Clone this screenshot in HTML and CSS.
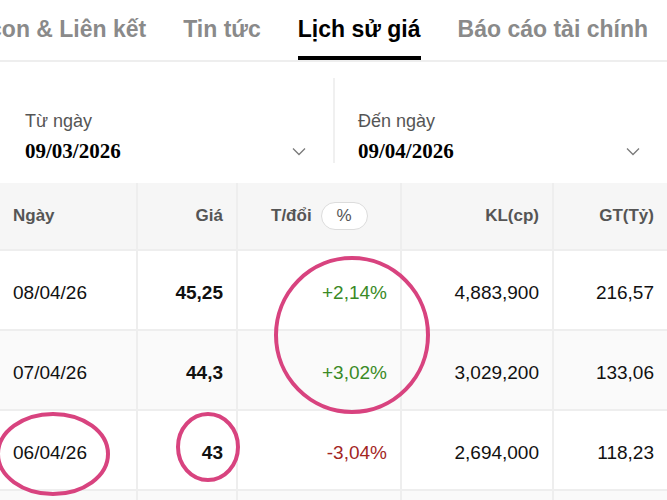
FILE: index.html
```html
<!DOCTYPE html>
<html lang="vi">
<head>
<meta charset="utf-8">
<title>Lịch sử giá</title>
<link rel="stylesheet" href="styles.css">
</head>
<body>
<div class="page">
  <nav class="tabs">
    <div class="tab">Công ty con &amp; Liên kết</div>
    <div class="tab">Tin tức</div>
    <div class="tab active">Lịch sử giá</div>
    <div class="tab">Báo cáo tài chính</div>
  </nav>

  <section class="dates">
    <div class="date-col">
      <div class="date-label">Từ ngày</div>
      <div class="date-value-row">
        <span class="date-value">09/03/2026</span>
        <svg class="chev" width="14" height="9" viewBox="0 0 14 9"><path d="M1 1.5 L7 7.5 L13 1.5" fill="none" stroke="#7a7a7a" stroke-width="1.3"/></svg>
      </div>
    </div>
    <div class="date-col right">
      <div class="date-label">Đến ngày</div>
      <div class="date-value-row">
        <span class="date-value">09/04/2026</span>
        <svg class="chev" width="14" height="9" viewBox="0 0 14 9"><path d="M1 1.5 L7 7.5 L13 1.5" fill="none" stroke="#7a7a7a" stroke-width="1.3"/></svg>
      </div>
    </div>
  </section>

  <section class="table">
    <div class="row head">
      <div class="cell">Ngày</div>
      <div class="cell num">Giá</div>
      <div class="cell change-head">T/đổi <span class="pill">%</span></div>
      <div class="cell num">KL(cp)</div>
      <div class="cell num">GT(Tỷ)</div>
    </div>
    <div class="row">
      <div class="cell">08/04/26</div>
      <div class="cell num bold">45,25</div>
      <div class="cell num up">+2,14%</div>
      <div class="cell num">4,883,900</div>
      <div class="cell num">216,57</div>
    </div>
    <div class="row alt">
      <div class="cell">07/04/26</div>
      <div class="cell num bold">44,3</div>
      <div class="cell num up">+3,02%</div>
      <div class="cell num">3,029,200</div>
      <div class="cell num">133,06</div>
    </div>
    <div class="row">
      <div class="cell">06/04/26</div>
      <div class="cell num bold">43</div>
      <div class="cell num down">-3,04%</div>
      <div class="cell num">2,694,000</div>
      <div class="cell num">118,23</div>
    </div>
    <div class="row alt">
      <div class="cell"></div>
      <div class="cell"></div>
      <div class="cell"></div>
      <div class="cell"></div>
      <div class="cell"></div>
    </div>
  </section>

  <svg class="marks" width="667" height="500" viewBox="0 0 667 500">
    <ellipse cx="352" cy="335" rx="76" ry="77" fill="none" stroke="#d8437f" stroke-width="4"/>
    <ellipse cx="53" cy="454" rx="55" ry="40" fill="none" stroke="#d8437f" stroke-width="4"/>
    <ellipse cx="208" cy="447" rx="30" ry="33" fill="none" stroke="#d8437f" stroke-width="4"/>
  </svg>
</div>
</body>
</html>
```

FILE: styles.css
```css
* { box-sizing: border-box; }
html, body { margin: 0; padding: 0; background: #fff; }
body {
  font-family: "Liberation Sans", Arial, sans-serif;
  color: #111;
  width: 667px;
  height: 500px;
  overflow: hidden;
}
.page { position: relative; width: 667px; height: 500px; overflow: hidden; }

.tabs {
  display: flex;
  justify-content: flex-end;
  gap: 37px;
  padding-right: 19px;
  height: 62px;
  border-bottom: 2px solid #eeeeee;
  overflow: hidden;
}
.tab {
  flex-shrink: 0;
  white-space: nowrap;
  height: 60px;
  padding-top: 15px;
  font-size: 23px;
  line-height: 28px;
  font-weight: 700;
  color: #8a8a8a;
}
.tab.active {
  color: #000;
  border-bottom: 4px solid #000;
}

.dates {
  display: flex;
  padding-top: 16px;
  height: 121px;
}
.date-col {
  width: 333px;
  height: 85px;
  padding: 32px 27px 0 25px;
}
.date-col.right {
  width: 334px;
  border-left: 2px solid #f0f0f0;
  padding-left: 23px;
}
.date-label {
  font-size: 18px;
  line-height: 22px;
  color: #555;
}
.date-value-row {
  margin-top: 6px;
  display: flex;
  align-items: center;
  justify-content: space-between;
  height: 26px;
}
.date-value {
  font-family: "Liberation Serif", "Times New Roman", serif;
  font-weight: 700;
  font-size: 21px;
  line-height: 26px;
  color: #000;
}
.chev { display: block; }

.table {
  display: flex;
  flex-direction: column;
  gap: 2px;
  background: #eeeeee;
  padding-bottom: 2px;
}
.row {
  display: grid;
  grid-template-columns: 136px 98px 162px 150px 1fr;
  gap: 2px;
  height: 78px;
}
.row.head { height: 66px; }
.cell {
  background: #fff;
  display: flex;
  align-items: center;
  padding: 6px 13px 0 13px;
  font-size: 19px;
  white-space: nowrap;
}
.row.alt .cell { background: #fafafa; }
.row.head .cell {
  background: #f6f6f6;
  font-size: 17px;
  font-weight: 700;
  color: #555;
  padding-top: 0;
}
.num { justify-content: flex-end; }
.cell.change-head { justify-content: flex-start; padding-left: 33px; }
.pill {
  display: inline-flex;
  align-items: center;
  justify-content: center;
  width: 47px;
  height: 28px;
  margin-left: 9px;
  border: 1.5px solid #dcdcdc;
  border-radius: 14px;
  background: #fff;
  font-weight: 400;
  font-size: 17px;
  color: #555;
}
.bold { font-weight: 700; }
.up { color: #3a8a26; }
.down { color: #a3261f; }

.marks {
  position: absolute;
  left: 0;
  top: 0;
  pointer-events: none;
}
```
